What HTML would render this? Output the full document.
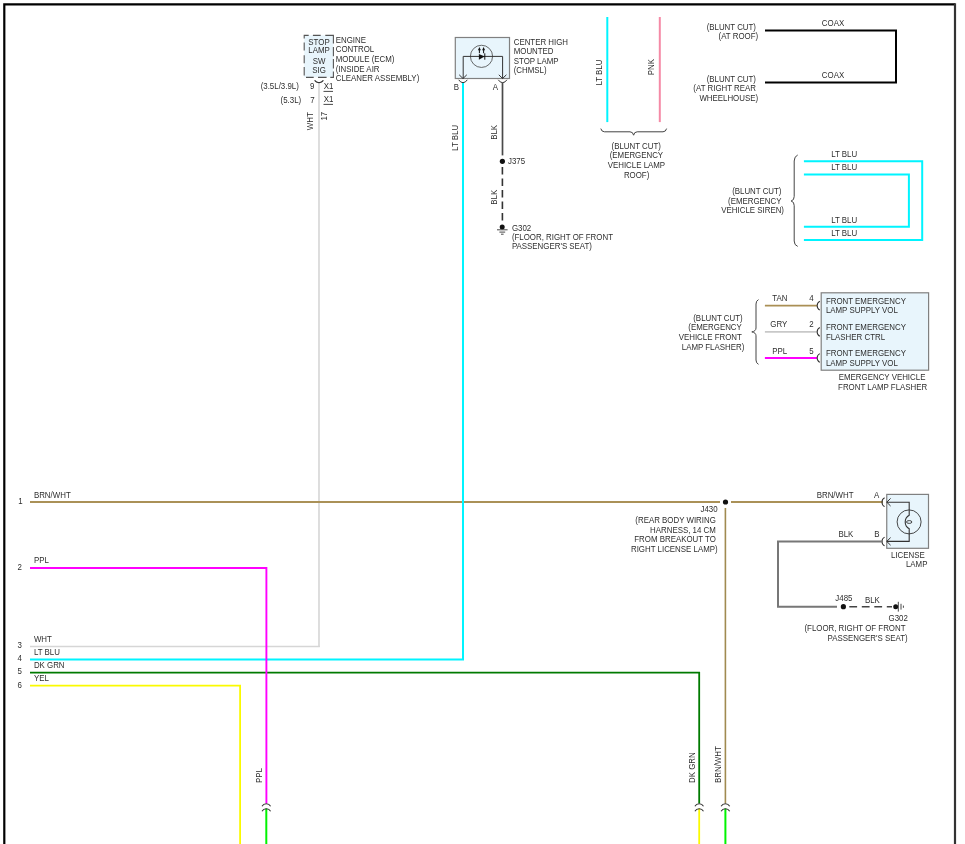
<!DOCTYPE html>
<html><head><meta charset="utf-8">
<style>
html,body{margin:0;padding:0;background:#fff;width:965px;height:844px;overflow:hidden}
svg{display:block;will-change:transform}
text{font-family:"Liberation Sans",sans-serif;font-size:8.5px;fill:#2e2e2e}
.w{fill:none;stroke-linecap:butt;stroke-linejoin:miter}
</style></head><body>
<svg width="965" height="844" viewBox="0 0 965 844">
<rect x="0" y="0" width="965" height="844" fill="#fff"/>
<!-- frame -->
<path class="w" d="M4.3,844 V4.3 H955" stroke="#000" stroke-width="2.2"/>
<path class="w" d="M955,3.2 V844" stroke="#333" stroke-width="2.2"/>

<!-- ===== wires (bottom layer) ===== -->
<path class="w" d="M319,83 V647.1" stroke="#d8d8d8" stroke-width="1.7"/>
<path class="w" d="M319.8,646.5 H30" stroke="#d6d6d6" stroke-width="1.3"/>
<path class="w" d="M30,502 H720" stroke="#aa9157" stroke-width="2"/>
<path class="w" d="M731,502 H883" stroke="#aa9157" stroke-width="2"/>
<path class="w" d="M725.4,508 V803.4" stroke="#a08a50" stroke-width="1.6"/>
<path class="w" d="M463,82.5 V659.6 H30" stroke="#00f4ff" stroke-width="2"/>
<path class="w" d="M30,672.7 H699.2 V803.4" stroke="#007a00" stroke-width="1.8"/>
<path class="w" d="M30,685.7 H240.1 V844" stroke="#fafa00" stroke-width="1.8"/>
<path class="w" d="M30,568 H266.4 V803.4" stroke="#ff00ff" stroke-width="1.9"/>
<path class="w" d="M266.3,808.5 V844" stroke="#00f400" stroke-width="2"/>
<path class="w" d="M699.2,808.5 V844" stroke="#fafa00" stroke-width="1.8"/>
<path class="w" d="M725.4,808.5 V844" stroke="#00f400" stroke-width="2"/>

<!-- bottom connectors -->
<g class="w" stroke="#333" stroke-width="1.1">
<path d="M262,806.2 A5,5 0 0 1 270.6,806.2"/>
<path d="M262,811.2 A5,5 0 0 1 270.6,811.2"/>
<path d="M694.9,806.2 A5,5 0 0 1 703.5,806.2"/>
<path d="M694.9,811.2 A5,5 0 0 1 703.5,811.2"/>
<path d="M721.1,806.2 A5,5 0 0 1 729.7,806.2"/>
<path d="M721.1,811.2 A5,5 0 0 1 729.7,811.2"/>
</g>

<!-- left pin labels -->
<text transform="translate(18.3,503.9) scale(0.93,1)">1</text>
<text transform="translate(33.9,498) scale(0.93,1)">BRN/WHT</text>
<text transform="translate(17.6,569.9) scale(0.93,1)">2</text>
<text transform="translate(33.9,562.9) scale(0.93,1)">PPL</text>
<text transform="translate(17.6,647.9) scale(0.93,1)">3</text>
<text transform="translate(33.9,641.6) scale(0.93,1)">WHT</text>
<text transform="translate(17.6,661.1) scale(0.93,1)">4</text>
<text transform="translate(33.9,654.5) scale(0.93,1)">LT BLU</text>
<text transform="translate(17.6,674.4) scale(0.93,1)">5</text>
<text transform="translate(33.9,667.7) scale(0.93,1)">DK GRN</text>
<text transform="translate(17.6,687.5) scale(0.93,1)">6</text>
<text transform="translate(33.9,680.6) scale(0.93,1)">YEL</text>

<!-- bottom vertical labels -->
<text transform="translate(262.1,783) rotate(-90) scale(0.93,1)">PPL</text>
<text transform="translate(695.4,783) rotate(-90) scale(0.93,1)">DK GRN</text>
<text transform="translate(721.3,783) rotate(-90) scale(0.93,1)">BRN/WHT</text>


<!-- ===== ECM ===== -->
<rect x="304.2" y="35.3" width="29.2" height="42" fill="#e8f5fc"/>
<path class="w" d="M303.7,35.4 H308.7 M312.9,35.4 H320.7 M325.3,35.4 H333.9 M306,77.4 H313.7 M318,77.4 H326.6 M330.3,77.4 H333.9 M304.2,34.9 V38.5 M304.2,42.5 V50.5 M304.2,55.3 V63.3 M304.2,66.9 V75.5 M333.4,34.9 V43.5 M333.4,47 V56.3 M333.4,59.1 V68.4 M333.4,71.6 V77.9" stroke="#555" stroke-width="1.1"/>
<text transform="translate(319,44.7) scale(0.93,1)" text-anchor="middle">STOP</text>
<text transform="translate(319,53.3) scale(0.93,1)" text-anchor="middle">LAMP</text>
<text transform="translate(319,64) scale(0.93,1)" text-anchor="middle">SW</text>
<text transform="translate(319,73.1) scale(0.93,1)" text-anchor="middle">SIG</text>
<text transform="translate(335.7,42.9) scale(0.93,1)">ENGINE</text>
<text transform="translate(335.7,51.9) scale(0.93,1)">CONTROL</text>
<text transform="translate(335.7,61.7) scale(0.93,1)">MODULE (ECM)</text>
<text transform="translate(335.7,71.5) scale(0.93,1)">(INSIDE AIR</text>
<text transform="translate(335.7,80.6) scale(0.93,1)">CLEANER ASSEMBLY)</text>
<path class="w" d="M314.6,80.4 Q316.2,82.4 319,82.7 Q321.8,82.4 323.4,80.4" stroke="#222" stroke-width="1.15"/>
<text transform="translate(298.8,89.4) scale(0.93,1)" text-anchor="end">(3.5L/3.9L)</text>
<text transform="translate(310,89.4) scale(0.93,1)">9</text>
<text transform="translate(323.8,89.4) scale(0.93,1)">X1</text>
<path class="w" d="M323.5,91.4 H333" stroke="#333" stroke-width="0.9"/>
<text transform="translate(301.2,103.2) scale(0.93,1)" text-anchor="end">(5.3L)</text>
<text transform="translate(310.3,102.6) scale(0.93,1)">7</text>
<text transform="translate(323.8,102.4) scale(0.93,1)">X1</text>
<path class="w" d="M323.5,104.4 H333" stroke="#333" stroke-width="0.9"/>
<text transform="translate(313.3,112.2) rotate(-90) scale(0.93,1)" text-anchor="end">WHT</text>
<text transform="translate(326.8,111.8) rotate(-90) scale(0.93,1)" text-anchor="end">17</text>

<!-- ===== CHMSL ===== -->
<rect x="455.3" y="37.5" width="54.2" height="41" fill="#e8f5fc" stroke="#808080" stroke-width="1.2"/>
<circle cx="481.5" cy="56.35" r="11.1" fill="none" stroke="#444" stroke-width="0.8"/>
<path class="w" d="M463.2,78.5 V56.4 H502.6 V78.5" stroke="#333" stroke-width="1"/>
<path class="w" d="M459.2,74.8 L463,78.5 L466.8,74.8 M498.8,74.8 L502.6,78.5 L506.4,74.8" stroke="#333" stroke-width="1"/>
<path d="M478.9,54 L484.6,56.6 L478.9,59.8 Z" fill="#111"/>
<path class="w" d="M484.8,53.3 V59.7" stroke="#111" stroke-width="1"/>
<path class="w" d="M479.4,53.2 V49.5 M483.6,53.2 V49.5" stroke="#111" stroke-width="1"/>
<path d="M477.9,50.3 L479.4,47 L480.9,50.3 Z M482.1,50.3 L483.6,47 L485.1,50.3 Z" fill="#111"/>
<path class="w" d="M458.7,79.8 Q460.3,82.5 463,82.7 Q465.7,82.5 467.3,79.8 M498.3,79.8 Q499.9,82.5 502.6,82.7 Q505.3,82.5 506.9,79.8" stroke="#333" stroke-width="1"/>
<text transform="translate(453.8,89.5) scale(0.93,1)">B</text>
<text transform="translate(492.8,89.5) scale(0.93,1)">A</text>
<text transform="translate(513.7,44.8) scale(0.93,1)">CENTER HIGH</text>
<text transform="translate(513.7,53.8) scale(0.93,1)">MOUNTED</text>
<text transform="translate(513.7,64.1) scale(0.93,1)">STOP LAMP</text>
<text transform="translate(513.7,72.7) scale(0.93,1)">(CHMSL)</text>
<path class="w" d="M502.5,82.5 V155.4" stroke="#4a4a4a" stroke-width="1.7"/>
<circle cx="502.4" cy="161.3" r="2.6" fill="#111"/>
<path class="w" d="M502.4,167 V222.5" stroke="#333" stroke-width="1.6" stroke-dasharray="7.5,4"/>
<circle cx="502.2" cy="227.1" r="2.5" fill="#111"/>
<path class="w" d="M497,229.8 H507.6 M499.4,232.1 H505.2 M501,234.2 H503.6" stroke="#333" stroke-width="0.9"/>
<text transform="translate(458.1,124.9) rotate(-90) scale(0.93,1)" text-anchor="end">LT BLU</text>
<text transform="translate(497.2,124.9) rotate(-90) scale(0.93,1)" text-anchor="end">BLK</text>
<text transform="translate(508,163.8) scale(0.93,1)">J375</text>
<text transform="translate(497.1,189.8) rotate(-90) scale(0.93,1)" text-anchor="end">BLK</text>
<text transform="translate(511.9,230.8) scale(0.93,1)">G302</text>
<text transform="translate(511.9,239.8) scale(0.93,1)">(FLOOR, RIGHT OF FRONT</text>
<text transform="translate(511.9,249.3) scale(0.93,1)">PASSENGER'S SEAT)</text>

<!-- ===== roof blunt cut ===== -->
<path class="w" d="M607.3,17 V122.1" stroke="#00f4ff" stroke-width="2"/>
<path class="w" d="M659.8,17 V122.1" stroke="#f58aa6" stroke-width="2"/>
<text transform="translate(602.4,59.6) rotate(-90) scale(0.93,1)" text-anchor="end">LT BLU</text>
<text transform="translate(654.3,59.1) rotate(-90) scale(0.93,1)" text-anchor="end">PNK</text>
<path class="w" d="M600.8,128.6 Q601.6,131.8 604.5,131.8 H630 Q633,131.8 633.6,135.2 Q634.2,131.8 637.2,131.8 H663 Q665.8,131.8 666.6,128.6" stroke="#444" stroke-width="1"/>
<text transform="translate(636.2,149) scale(0.93,1)" text-anchor="middle">(BLUNT CUT)</text>
<text transform="translate(636.4,158) scale(0.93,1)" text-anchor="middle">(EMERGENCY</text>
<text transform="translate(636.4,167.7) scale(0.93,1)" text-anchor="middle">VEHICLE LAMP</text>
<text transform="translate(636.6,177.5) scale(0.93,1)" text-anchor="middle">ROOF)</text>

<!-- ===== coax ===== -->
<path class="w" d="M765,30.4 H896 V82.6 H765" stroke="#000" stroke-width="2"/>
<text transform="translate(833,25.5) scale(0.93,1)" text-anchor="middle">COAX</text>
<text transform="translate(833,77.8) scale(0.93,1)" text-anchor="middle">COAX</text>
<text transform="translate(756,29.9) scale(0.93,1)" text-anchor="end">(BLUNT CUT)</text>
<text transform="translate(758.1,39) scale(0.93,1)" text-anchor="end">(AT ROOF)</text>
<text transform="translate(756,81.6) scale(0.93,1)" text-anchor="end">(BLUNT CUT)</text>
<text transform="translate(756,91.3) scale(0.93,1)" text-anchor="end">(AT RIGHT REAR</text>
<text transform="translate(758.1,100.5) scale(0.93,1)" text-anchor="end">WHEELHOUSE)</text>

<!-- ===== siren ===== -->
<path class="w" d="M797.7,155 Q794.2,156.5 794.2,161 V196.5 Q794.2,200.3 791.1,201 Q794.2,201.7 794.2,205.5 V241 Q794.2,245.2 797.7,246.4" stroke="#444" stroke-width="1"/>
<path class="w" d="M803.9,161.2 H922.2 V240.1 H803.9" stroke="#00f4ff" stroke-width="2"/>
<path class="w" d="M803.9,174.5 H908.9 V226.7 H803.9" stroke="#00f4ff" stroke-width="2"/>
<text transform="translate(831.2,156.8) scale(0.93,1)">LT BLU</text>
<text transform="translate(831.2,169.9) scale(0.93,1)">LT BLU</text>
<text transform="translate(831.2,222.7) scale(0.93,1)">LT BLU</text>
<text transform="translate(831.2,235.5) scale(0.93,1)">LT BLU</text>
<text transform="translate(781.5,193.5) scale(0.93,1)" text-anchor="end">(BLUNT CUT)</text>
<text transform="translate(781.5,203.5) scale(0.93,1)" text-anchor="end">(EMERGENCY</text>
<text transform="translate(784,213.4) scale(0.93,1)" text-anchor="end">VEHICLE SIREN)</text>

<!-- ===== front lamp flasher ===== -->
<rect x="821.2" y="292.8" width="107.4" height="77.4" fill="#e8f5fc" stroke="#808080" stroke-width="1.2"/>
<path class="w" d="M764.9,305.7 H817" stroke="#aa8f55" stroke-width="1.8"/>
<path class="w" d="M764.9,331.9 H817" stroke="#c8c8c8" stroke-width="1.8"/>
<path class="w" d="M764.9,358 H817" stroke="#ff00ff" stroke-width="2"/>
<path class="w" d="M819.8,301.3 A5,5 0 0 0 819.8,310.1 M819.8,327.5 A5,5 0 0 0 819.8,336.3 M819.8,353.6 A5,5 0 0 0 819.8,362.4" stroke="#333" stroke-width="1.05"/>
<path class="w" d="M758.5,299.6 Q756,300.8 756,304 V328 Q756,331.2 751.8,331.9 Q756,332.6 756,335.8 V360 Q756,363.2 758.5,364.3" stroke="#444" stroke-width="1"/>
<text transform="translate(779.8,301.1) scale(0.93,1)" text-anchor="middle">TAN</text>
<text transform="translate(809.3,301.1) scale(0.93,1)">4</text>
<text transform="translate(778.8,327) scale(0.93,1)" text-anchor="middle">GRY</text>
<text transform="translate(809.3,327) scale(0.93,1)">2</text>
<text transform="translate(779.8,353.8) scale(0.93,1)" text-anchor="middle">PPL</text>
<text transform="translate(809.3,353.8) scale(0.93,1)">5</text>
<text transform="translate(742.6,320.7) scale(0.93,1)" text-anchor="end">(BLUNT CUT)</text>
<text transform="translate(741.8,329.9) scale(0.93,1)" text-anchor="end">(EMERGENCY</text>
<text transform="translate(741.8,339.6) scale(0.93,1)" text-anchor="end">VEHICLE FRONT</text>
<text transform="translate(744.3,349.6) scale(0.93,1)" text-anchor="end">LAMP FLASHER)</text>
<text transform="translate(825.9,304.1) scale(0.93,1)">FRONT EMERGENCY</text>
<text transform="translate(825.9,312.8) scale(0.93,1)">LAMP SUPPLY VOL</text>
<text transform="translate(825.9,330.1) scale(0.93,1)">FRONT EMERGENCY</text>
<text transform="translate(825.9,339.6) scale(0.93,1)">FLASHER CTRL</text>
<text transform="translate(825.9,356.2) scale(0.93,1)">FRONT EMERGENCY</text>
<text transform="translate(825.9,365.6) scale(0.93,1)">LAMP SUPPLY VOL</text>
<text transform="translate(925.4,380) scale(0.93,1)" text-anchor="end">EMERGENCY VEHICLE</text>
<text transform="translate(927.2,389.9) scale(0.93,1)" text-anchor="end">FRONT LAMP FLASHER</text>

<!-- ===== J430 ===== -->
<circle cx="725.5" cy="502" r="2.6" fill="#111"/>
<text transform="translate(717.6,512.4) scale(0.93,1)" text-anchor="end">J430</text>
<text transform="translate(715.8,522.6) scale(0.93,1)" text-anchor="end">(REAR BODY WIRING</text>
<text transform="translate(715.8,532.5) scale(0.93,1)" text-anchor="end">HARNESS, 14 CM</text>
<text transform="translate(715.8,542.2) scale(0.93,1)" text-anchor="end">FROM BREAKOUT TO</text>
<text transform="translate(717.6,551.6) scale(0.93,1)" text-anchor="end">RIGHT LICENSE LAMP)</text>

<!-- ===== license lamp ===== -->
<rect x="886.75" y="494.4" width="41.75" height="53.9" fill="#e8f5fc" stroke="#808080" stroke-width="1.2"/>
<path class="w" d="M886.75,502.2 H909.2 V515.2 A7.7,7.7 0 0 0 909.2,528.7 V541.4 H886.75" stroke="#333" stroke-width="1.1"/>
<circle cx="909.1" cy="521.9" r="12" fill="none" stroke="#333" stroke-width="0.9"/>
<ellipse cx="909.2" cy="522" rx="2.7" ry="1.4" fill="none" stroke="#333" stroke-width="0.9"/>
<path class="w" d="M890.6,498.4 L886.75,502.2 L890.6,506 M890.6,537.6 L886.75,541.4 L890.6,545.2" stroke="#333" stroke-width="1"/>
<path class="w" d="M884.6,497.8 A5,5 0 0 0 884.6,506.6 M884.6,537.1 A5,5 0 0 0 884.6,545.9" stroke="#333" stroke-width="1.05"/>
<text transform="translate(816.7,497.7) scale(0.93,1)">BRN/WHT</text>
<text transform="translate(874,497.7) scale(0.93,1)">A</text>
<text transform="translate(838.4,537) scale(0.93,1)">BLK</text>
<text transform="translate(874.2,537) scale(0.93,1)">B</text>
<text transform="translate(924.8,557.6) scale(0.93,1)" text-anchor="end">LICENSE</text>
<text transform="translate(927.4,567.1) scale(0.93,1)" text-anchor="end">LAMP</text>
<path class="w" d="M883,541.5 H778 V606.7 H837" stroke="#777" stroke-width="2"/>
<circle cx="843.4" cy="606.7" r="2.6" fill="#111"/>
<path class="w" d="M849.3,606.7 H892" stroke="#444" stroke-width="1.6" stroke-dasharray="7.8,4.7"/>
<circle cx="895.7" cy="606.7" r="2.5" fill="#111"/>
<path class="w" d="M898.3,601.8 V611.6 M901,603.8 V609.6 M903.4,605.6 V607.8" stroke="#333" stroke-width="0.9"/>
<text transform="translate(835.3,600.8) scale(0.93,1)">J485</text>
<text transform="translate(864.9,602.8) scale(0.93,1)">BLK</text>
<text transform="translate(888.5,620.7) scale(0.93,1)">G302</text>
<text transform="translate(905.5,631.1) scale(0.93,1)" text-anchor="end">(FLOOR, RIGHT OF FRONT</text>
<text transform="translate(907.6,640.7) scale(0.93,1)" text-anchor="end">PASSENGER'S SEAT)</text>

</svg>
</body></html>
